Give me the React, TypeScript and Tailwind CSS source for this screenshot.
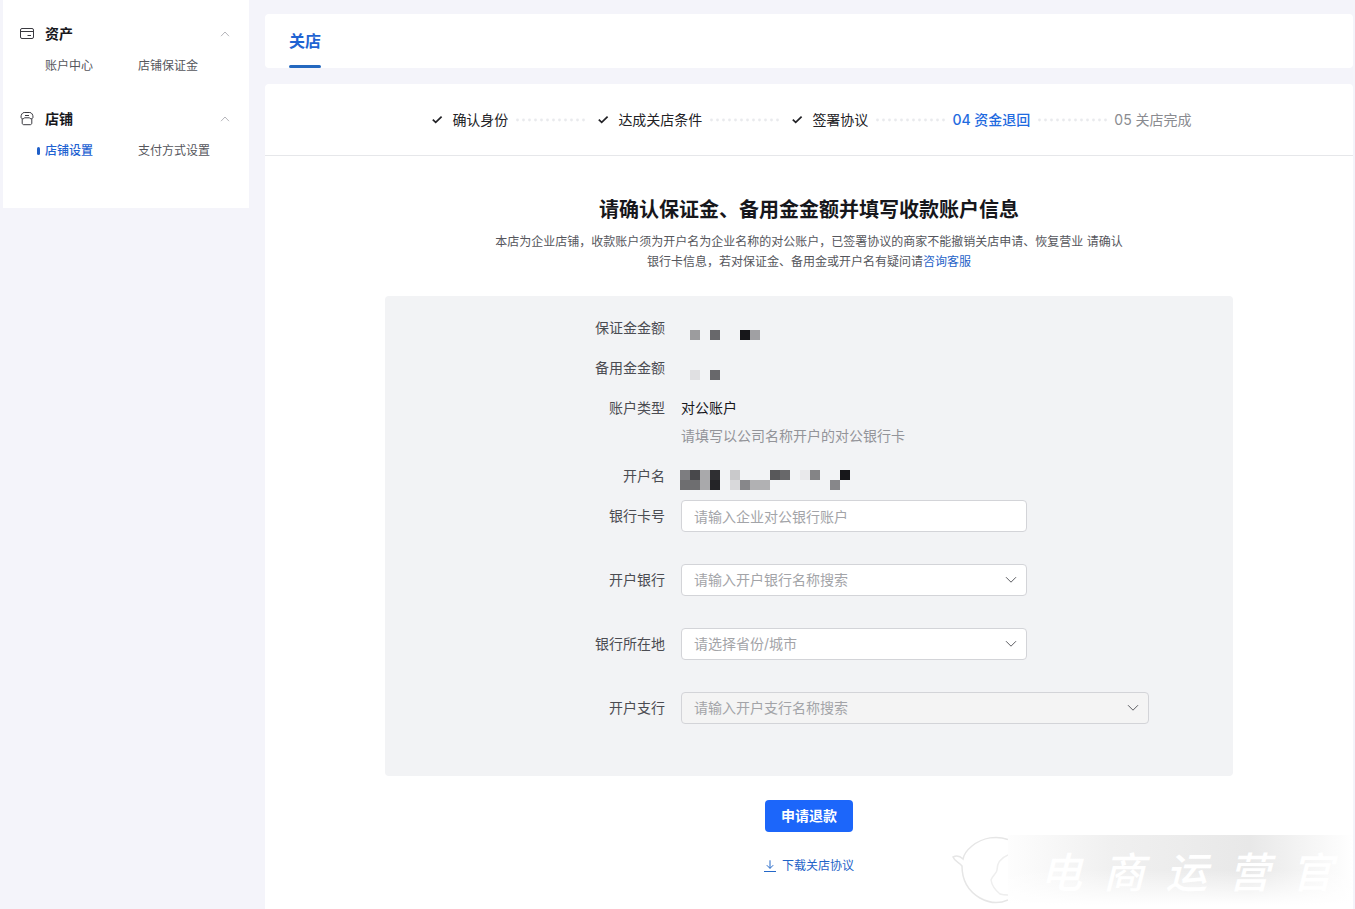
import { useState } from 'react';
import type { ReactNode } from 'react';

type Block = [x: number, y: number, width: number, fill: string];

const DEPOSIT_BLOCKS: Block[] = [
    [9, 18, 10, '#9c9c9e'],
    [29, 18, 10, '#68686b'],
    [59, 18, 10, '#17171a'],
    [69, 18, 10, '#a0a0a3'],
];

const RESERVE_BLOCKS: Block[] = [
    [9, 18, 10, '#e0e0e2'],
    [29, 18, 10, '#68686b'],
];

const ACCOUNT_NAME_BLOCKS: Block[] = [
    [-1, 10, 10, '#7d7d80'],
    [9, 10, 10, '#48484b'],
    [19, 10, 10, '#a9a9ab'],
    [29, 10, 10, '#2f2f32'],
    [49, 10, 10, '#c9c9cb'],
    [89, 10, 10, '#58585a'],
    [99, 10, 10, '#68686a'],
    [119, 10, 10, '#e9e9eb'],
    [129, 10, 10, '#848486'],
    [159, 10, 10, '#17171a'],
    [-1, 20, 20, '#6e6e70'],
    [19, 20, 10, '#a9a9ab'],
    [29, 20, 10, '#242427'],
    [49, 20, 10, '#d9d9db'],
    [59, 20, 10, '#87878a'],
    [69, 20, 20, '#b1b1b3'],
    [149, 20, 10, '#87878a'],
];

function ChevronUp() {
    return (
        <svg width="10" height="6" viewBox="0 0 10 6" fill="none" stroke="#b5b5ba" aria-hidden="true">
            <path d="M1 5.2 5 1l4 4.2" />
        </svg>
    );
}

function CardIcon() {
    return (
        <svg width="14" height="14" viewBox="0 0 14 14" fill="none" stroke="#3a3a40" aria-hidden="true">
            <rect x="0.5" y="1.5" width="13" height="10" rx="1.5" />
            <path d="M0.5 4.5h13M7.5 8.5h3.5" />
        </svg>
    );
}

function ShopIcon() {
    return (
        <svg width="14" height="14" viewBox="0 0 14 14" fill="none" stroke="#3a3a40" aria-hidden="true">
            <path d="M4.2.5h5.600C11.700.5 13 2.800 13 5c0 1.100-.8 1.800-1.800 1.800-.8 0-1.400-.5-1.900-1H4.700c-.5.5-1.100 1-1.900 1C1.800 6.800 1 6.100 1 5 1 2.800 2.300.5 4.200.5z" />
            <path d="M2.200 6.700v4.300c0 1 .6 1.700 1.600 1.700h6.400c1 0 1.600-.7 1.600-1.700V6.700M5 3.500h4" />
        </svg>
    );
}

function CheckIcon() {
    return (
        <svg width="12" height="12" viewBox="0 0 12 12" fill="none" stroke="#222226" strokeWidth="1.7" aria-hidden="true">
            <path d="M1.800 5.600 4.700 8.400 10.600 2.600" />
        </svg>
    );
}

function DownloadIcon() {
    return (
        <svg width="12" height="12" viewBox="0 0 12 12" fill="none" stroke="#2468c8" aria-hidden="true">
            <path d="M6 .3v8M2.800 5.200 6 8.400l3.200-3.200M0 11.500h12" />
        </svg>
    );
}

interface NavGroupProps {
    icon: ReactNode;
    title: string;
    items: string[];
    active?: string;
}

function NavGroup({ icon, title, items, active }: NavGroupProps) {
    const [open, setOpen] = useState(true);

    return (
        <section>
            <button
                type="button"
                aria-expanded={open}
                onClick={() => setOpen(!open)}
                className="flex h-6 w-full items-center pl-[17px] pr-[19px]"
            >
                {icon}
                <span className="ml-[11px] flex-1 text-left text-sm font-bold text-[#17171c]">{title}</span>
                <ChevronUp />
            </button>
            {open && (
                <ul className="mt-2 grid grid-cols-[93px_1fr] pl-[42px] text-xs leading-6">
                    {items.map((item) => (
                        <li key={item} className="relative">
                            {item === active && (
                                <span className="absolute -left-2 top-2 h-2 w-[3px] rounded-sm bg-[#1f5fc8]" />
                            )}
                            <a
                                href="#"
                                className={item === active ? 'font-medium text-[#1f63d2]' : 'text-[#55565c]'}
                            >
                                {item}
                            </a>
                        </li>
                    ))}
                </ul>
            )}
        </section>
    );
}

function StepDots() {
    return (
        <svg width="70" height="4" viewBox="0 0 70 4" fill="#e9eaed" className="ml-2 mr-1.5" aria-hidden="true">
            {Array.from({ length: 12 }, (_, i) => (
                <circle key={i} cx={1.5 + i * 6} cy="2" r="1.4" />
            ))}
        </svg>
    );
}

function DoneStep({ label }: { label: string }) {
    return (
        <li className="flex items-center text-[#222226]">
            <span className="flex w-[26px] justify-center pr-1">
                <CheckIcon />
            </span>
            {label}
            <StepDots />
        </li>
    );
}

function Mosaic({ blocks }: { blocks: Block[] }) {
    return (
        <svg width="180" height="32" viewBox="0 0 180 32" className="overflow-visible" aria-hidden="true">
            {blocks.map(([x, y, width, fill]) => (
                <rect key={`${x}-${y}`} x={x} y={y} width={width} height="10" fill={fill} />
            ))}
        </svg>
    );
}

function Row({ label, htmlFor, children }: { label: string; htmlFor?: string; children: ReactNode }) {
    const labelClass = 'w-[280px] shrink-0 text-right leading-8 text-[#4b4c52]';

    return (
        <div className="flex gap-4">
            {htmlFor ? (
                <label htmlFor={htmlFor} className={labelClass}>{label}</label>
            ) : (
                <span className={labelClass}>{label}</span>
            )}
            <div className="min-w-0">{children}</div>
        </div>
    );
}

interface SelectFieldProps {
    id: string;
    placeholder: string;
    wide?: boolean;
    disabled?: boolean;
}

function SelectField({ id, placeholder, wide, disabled }: SelectFieldProps) {
    return (
        <div className={wide ? 'relative w-[468px]' : 'relative w-[346px]'}>
            <select
                id={id}
                defaultValue=""
                disabled={disabled}
                className="block h-8 w-full appearance-none rounded border border-[#d3d4d8] bg-white px-3 text-[#a3a4a8] opacity-100 disabled:bg-[#f4f4f4]"
            >
                <option value="">{placeholder}</option>
            </select>
            <svg
                width="12"
                height="8"
                viewBox="0 0 12 8"
                fill="none"
                stroke="#5c5d62"
                className="pointer-events-none absolute right-2.5 top-3"
                aria-hidden="true"
            >
                <path d="M1 1.200 6 6.200l5-5" />
            </svg>
        </div>
    );
}

function Watermark() {
    return (
        <div className="pointer-events-none absolute bottom-1 right-0 flex h-[70px] items-center" aria-hidden="true">
            <svg width="56" height="70" viewBox="0 0 56 70" fill="none" stroke="#e6e6e6" strokeWidth="1.5">
                <path d="M56 4.500C45 .5 31 2 20 11c-5 4-8 8-9 13-3-3-6-4-10-2 2 5 6 5 9 9 0 15 6 25 18 32 9 5 19 6 28 2" />
                <path d="M56 20c-7 3-11 8-11 15 0 3-5 6-6 10 1 6 4 10 9 14 3 1 5 1 8 1" stroke="#eeeeee" />
            </svg>
            <div className="flex h-full w-[345px] items-center justify-between bg-[linear-gradient(to_bottom,#ffffff00_50%,#ffffff_100%),linear-gradient(to_right,#fdfdfd_0%,#f0f0f0_30%,#e8e8e8_70%,#ffffff_100%)] pl-8 pr-5 font-['Noto_Sans_CJK_SC',sans-serif] text-[42px] font-medium italic text-white">
                <span>电</span>
                <span>商</span>
                <span>运</span>
                <span>营</span>
                <span>官</span>
            </div>
        </div>
    );
}

export default function App() {
    return (
        <div className="flex min-h-screen items-start gap-4 bg-[#f4f4fa] pl-[3px] pr-0.5 font-['Inter','Noto_Sans_CJK_SC',sans-serif] text-sm">
            <nav className="flex w-[246px] shrink-0 flex-col gap-[29px] bg-white pb-[45px] pt-[22px]">
                <NavGroup icon={<CardIcon />} title="资产" items={['账户中心', '店铺保证金']} />
                <NavGroup icon={<ShopIcon />} title="店铺" items={['店铺设置', '支付方式设置']} active="店铺设置" />
            </nav>

            <main className="flex min-h-screen min-w-0 flex-1 flex-col gap-4 pt-3.5">
                <div className="flex h-[54px] rounded bg-white px-6">
                    <button
                        type="button"
                        className="flex flex-col justify-between text-base font-bold text-[#1f63d2]"
                    >
                        <span className="pt-[15px] leading-6">关店</span>
                        <span className="h-[3px] w-full rounded-sm bg-[#2468bf]" />
                    </button>
                </div>

                <div className="relative flex-1 rounded-t bg-white pb-8">
                    <ol className="flex h-[72px] items-center justify-center border-b border-[#e6e7ea]">
                        <DoneStep label="确认身份" />
                        <DoneStep label="达成关店条件" />
                        <DoneStep label="签署协议" />
                        <li className="flex items-center font-medium text-[#1f6be0]">
                            04 资金退回
                            <StepDots />
                        </li>
                        <li className="text-[#8a8b90]">05 关店完成</li>
                    </ol>

                    <Watermark />

                    <div className="relative flex flex-col items-center pt-10">
                        <h1 className="text-xl font-bold leading-7 text-[#17171c]">
                            请确认保证金、备用金金额并填写收款账户信息
                        </h1>
                        <div className="mt-2 w-[632px] text-center text-xs leading-5 text-[#55565c]">
                            <p>本店为企业店铺，收款账户须为开户名为企业名称的对公账户，已签署协议的商家不能撤销关店申请、恢复营业 请确认</p>
                            <p>
                                银行卡信息，若对保证金、备用金或开户名有疑问请
                                <a href="#" className="text-[#1f63c8]">咨询客服</a>
                            </p>
                        </div>

                        <form
                            className="mt-6 flex flex-col items-center"
                            onSubmit={(e) => e.preventDefault()}
                        >
                            <div className="flex w-[848px] flex-col gap-2 rounded bg-[#f2f3f5] pb-[52px] pt-4">
                                <Row label="保证金金额">
                                    <Mosaic blocks={DEPOSIT_BLOCKS} />
                                </Row>
                                <Row label="备用金金额">
                                    <Mosaic blocks={RESERVE_BLOCKS} />
                                </Row>
                                <Row label="账户类型">
                                    <p className="leading-8 text-[#17171c]">对公账户</p>
                                    <p className="mb-1 leading-6 text-[#939499]">请填写以公司名称开户的对公银行卡</p>
                                </Row>
                                <Row label="开户名">
                                    <Mosaic blocks={ACCOUNT_NAME_BLOCKS} />
                                </Row>
                                <div className="flex flex-col gap-8">
                                    <Row label="银行卡号" htmlFor="card-number">
                                        <input
                                            id="card-number"
                                            type="text"
                                            placeholder="请输入企业对公银行账户"
                                            className="block h-8 w-[346px] rounded border border-[#d3d4d8] bg-white px-3 placeholder:text-[#a3a4a8]"
                                        />
                                    </Row>
                                    <Row label="开户银行" htmlFor="bank">
                                        <SelectField id="bank" placeholder="请输入开户银行名称搜索" />
                                    </Row>
                                    <Row label="银行所在地" htmlFor="bank-city">
                                        <SelectField id="bank-city" placeholder="请选择省份/城市" />
                                    </Row>
                                    <Row label="开户支行" htmlFor="branch">
                                        <SelectField id="branch" placeholder="请输入开户支行名称搜索" wide disabled />
                                    </Row>
                                </div>
                            </div>

                            <button
                                type="submit"
                                className="mt-6 h-8 rounded bg-[#1c66fa] px-4 font-bold text-white"
                            >
                                申请退款
                            </button>
                        </form>

                        <a href="#" className="mt-6 flex items-center gap-1.5 text-xs leading-5 text-[#1f63c8]">
                            <DownloadIcon />
                            下载关店协议
                        </a>
                    </div>
                </div>
            </main>
        </div>
    );
}
